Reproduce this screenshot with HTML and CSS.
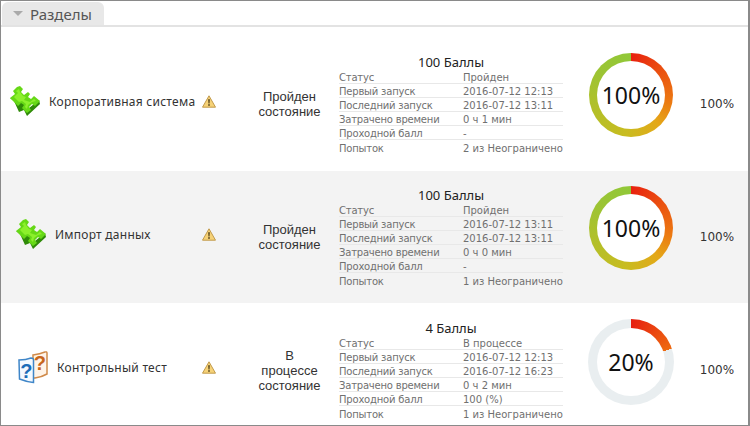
FILE: index.html
```html
<!DOCTYPE html>
<html lang="ru">
<head>
    <meta charset="UTF-8">
    <title>Разделы</title>
    <link rel="stylesheet" href="styles.css">
</head>
<body>
    <svg class="defs" width="0" height="0">
        <defs>
            <symbol id="puzzle" viewBox="0 0 30 30">
                <path d="M0 12 L4 15 L9 26 L14 24 L17 30 L30 18 L29 14 L19 22 L9 13 Z" fill="#2f8a08"/>
                <path d="M0 12 L5 8 L3 5 L7 1 L10 0 L13 3 L11 6 L14 9 L18 6 L20 8 L18 11 L21 13 L24 10 L30 15 L25 20 L22 18 L19 21 L21 24 L17 27 L12 22 L14 19 L11 17 L8 20 Z" fill="#66d816"/>
                <path d="M4 11 L8 7 L6 5 L9 3 L10 6 L13 10 L16 11 L14 14 L20 16 L24 13 L26 15 L22 16 L18 19 L17 23 L15 21 L16 18 L12 15 L9 16 Z" fill="#8cf02c"/>
            </symbol>
            <symbol id="warn" viewBox="0 0 14 13">
                <path d="M7 .8 L13.5 12.2 H.5 Z" fill="#f6d277" stroke="#c19a4c" stroke-linejoin="round"/>
                <path d="M6.2 4.2 H7.8 L7.5 8.4 H6.5 Z M6.2 9.2 H7.8 V10.7 H6.2 Z" fill="#4a3a14"/>
            </symbol>
            <symbol id="quiz" viewBox="0 0 30 33">
                <path d="M15 4 Q22 3 27 1 Q29 .5 29 2 V23 Q24 26 17 27 L15 27 Z" fill="#fff4e8" stroke="#d08a4a" stroke-width="1.5"/>
                <path d="M1 9 Q8 9 13 7 Q15.5 7 15.5 9 V31.5 Q9 31 1.5 28 Z" fill="#f4f9ff" stroke="#3f86c8" stroke-width="1.5"/>
                <text x="22" y="19" class="quiz-mark quiz-mark-back" text-anchor="middle">?</text>
                <text x="8.5" y="27" class="quiz-mark quiz-mark-front" text-anchor="middle">?</text>
            </symbol>
        </defs>
    </svg>

    <div class="frame">
        <div class="tabbar">
            <div class="tab"><span class="caret"></span>Разделы</div>
        </div>

        <div class="row row-first">
            <div class="name name-corp">
                <svg class="icon"><use href="#puzzle"/></svg>
                <span>Корпоративная система</span>
            </div>
            <div class="warn-cell"><svg class="warn"><use href="#warn"/></svg></div>
            <div class="state">Пройден<br>состояние</div>
            <div class="details">
                <div class="points">100 Баллы</div>
                <table class="info">
                    <tr><td>Статус</td><td>Пройден</td></tr>
                    <tr><td>Первый запуск</td><td>2016-07-12 12:13</td></tr>
                    <tr><td>Последний запуск</td><td>2016-07-12 13:11</td></tr>
                    <tr><td>Затрачено времени</td><td>0 ч 1 мин</td></tr>
                    <tr><td>Проходной балл</td><td>-</td></tr>
                    <tr><td>Попыток</td><td>2 из Неограничено</td></tr>
                </table>
            </div>
            <div class="chart"><div class="donut"><span>100%</span></div></div>
            <div class="score">100%</div>
        </div>

        <div class="row row-alt">
            <div class="name name-import">
                <svg class="icon"><use href="#puzzle"/></svg>
                <span>Импорт данных</span>
            </div>
            <div class="warn-cell"><svg class="warn"><use href="#warn"/></svg></div>
            <div class="state">Пройден<br>состояние</div>
            <div class="details">
                <div class="points">100 Баллы</div>
                <table class="info">
                    <tr><td>Статус</td><td>Пройден</td></tr>
                    <tr><td>Первый запуск</td><td>2016-07-12 13:11</td></tr>
                    <tr><td>Последний запуск</td><td>2016-07-12 13:11</td></tr>
                    <tr><td>Затрачено времени</td><td>0 ч 0 мин</td></tr>
                    <tr><td>Проходной балл</td><td>-</td></tr>
                    <tr><td>Попыток</td><td>1 из Неограничено</td></tr>
                </table>
            </div>
            <div class="chart"><div class="donut"><span>100%</span></div></div>
            <div class="score">100%</div>
        </div>

        <div class="row row-last">
            <div class="name name-test">
                <svg class="icon icon-quiz"><use href="#quiz"/></svg>
                <span>Контрольный тест</span>
            </div>
            <div class="warn-cell"><svg class="warn"><use href="#warn"/></svg></div>
            <div class="state">В<br>процессе<br>состояние</div>
            <div class="details">
                <div class="points">4 Баллы</div>
                <table class="info">
                    <tr><td>Статус</td><td>В процессе</td></tr>
                    <tr><td>Первый запуск</td><td>2016-07-12 12:13</td></tr>
                    <tr><td>Последний запуск</td><td>2016-07-12 16:23</td></tr>
                    <tr><td>Затрачено времени</td><td>0 ч 2 мин</td></tr>
                    <tr><td>Проходной балл</td><td>100 (%)</td></tr>
                    <tr><td>Попыток</td><td>1 из Неограничено</td></tr>
                </table>
            </div>
            <div class="chart"><div class="donut donut-part"><span>20%</span></div></div>
            <div class="score">100%</div>
        </div>
    </div>
</body>
</html>
```

FILE: styles.css
```css
html, body {
    margin: 0;
    padding: 0;
    background: white;
}
body {
    font-family: 'Noto Sans', 'Liberation Sans', sans-serif;
    font-size: 12px;
    color: #333;
}
.defs {
    display: block;
    height: 0;
}
.frame {
    box-sizing: border-box;
    width: 750px;
    height: 426px;
    overflow: hidden;
    border: 1px solid #8a8a8a;
    border-width: 1px 2px 1px 1px;
}
.tabbar {
    box-sizing: border-box;
    height: 26px;
    padding: 1px 0 0 1px;
    border-bottom: 2px solid #e3e3e3;
}
.tab {
    display: flex;
    align-items: center;
    width: 102px;
    height: 23px;
    box-sizing: border-box;
    padding-left: 11px;
    background: #e8e8e8;
    border-radius: 6px 6px 0 0;
    font-size: 15px;
    color: #555;
}
.caret {
    width: 0;
    height: 0;
    margin-right: 7px;
    border: 5px solid transparent;
    border-top-color: #aaa;
    border-bottom: 0;
}
.row {
    display: grid;
    grid-template-columns: 199px 40px 99px 224px 136px 36px;
    align-items: center;
    padding: 16px 0;
}
.row-first {
    padding: 27px 0 17px;
}
.row-alt {
    background: #f3f3f3;
}
.row-last {
    padding-top: 17px;
}
.name {
    display: flex;
    align-items: center;
    gap: 9px;
    padding-bottom: 6px;
    font-size: 12px;
    letter-spacing: .25px;
    color: #333;
    white-space: nowrap;
}
.name-corp {
    padding-left: 9px;
}
.name-import {
    padding-left: 15px;
}
.name-test {
    padding-left: 17px;
}
.icon {
    width: 30px;
    height: 30px;
    flex: none;
}
.icon-quiz {
    height: 33px;
}
.quiz-mark {
    font-family: 'Liberation Sans', sans-serif;
    font-weight: bold;
    font-size: 20px;
}
.quiz-mark-back {
    fill: #c8661c;
}
.quiz-mark-front {
    fill: #1c6cb8;
}
.warn-cell {
    padding: 0 0 6px 2px;
    line-height: 0;
}
.warn {
    width: 14px;
    height: 13px;
}
.state {
    text-align: center;
    font-family: 'Liberation Sans', sans-serif;
    line-height: 15px;
    font-size: 13px;
    color: #333;
}
.points {
    height: 16px;
    line-height: 16px;
    text-align: center;
    font-size: 13px;
    color: #222;
}
.info {
    width: 100%;
    border-collapse: separate;
    border-spacing: 0;
    table-layout: fixed;
    font-family: 'DejaVu Sans', sans-serif;
    font-size: 10px;
    color: #707070;
}
.info td {
    box-sizing: border-box;
    height: 14px;
    padding: 2px 0 0;
    line-height: 11px;
    white-space: nowrap;
    border-bottom: 1px solid #e8e8e8;
}
.info td:first-child {
    width: 124px;
    letter-spacing: -.2px;
}
.info tr:last-child td {
    border-bottom: 0;
}
.chart {
    display: flex;
    align-self: start;
    justify-content: center;
    margin-top: -1px;
}
.donut {
    position: relative;
    display: flex;
    align-items: center;
    justify-content: center;
    width: 84px;
    height: 84px;
    border-radius: 50%;
    background: conic-gradient(#e8200f 0, #ea4a10 12%, #ec7a12 28%, #e4a818 38%, #c8bc20 52%, #b4bf28 68%, #9cc434 85%, #90c838 100%);
}
.donut-part {
    width: 86px;
    height: 86px;
    background: conic-gradient(#e61e10 0, #ee6a10 20%, #e9eef0 20%);
}
.donut::before {
    content: "";
    position: absolute;
    inset: 8px;
    border-radius: 50%;
    background: white;
}
.donut-part::before {
    inset: 9px;
}
.donut span {
    position: relative;
    font-size: 23px;
    color: #111;
}
.score {
    text-align: center;
    font-family: 'DejaVu Sans', sans-serif;
    font-size: 12px;
    color: #333;
}
```
